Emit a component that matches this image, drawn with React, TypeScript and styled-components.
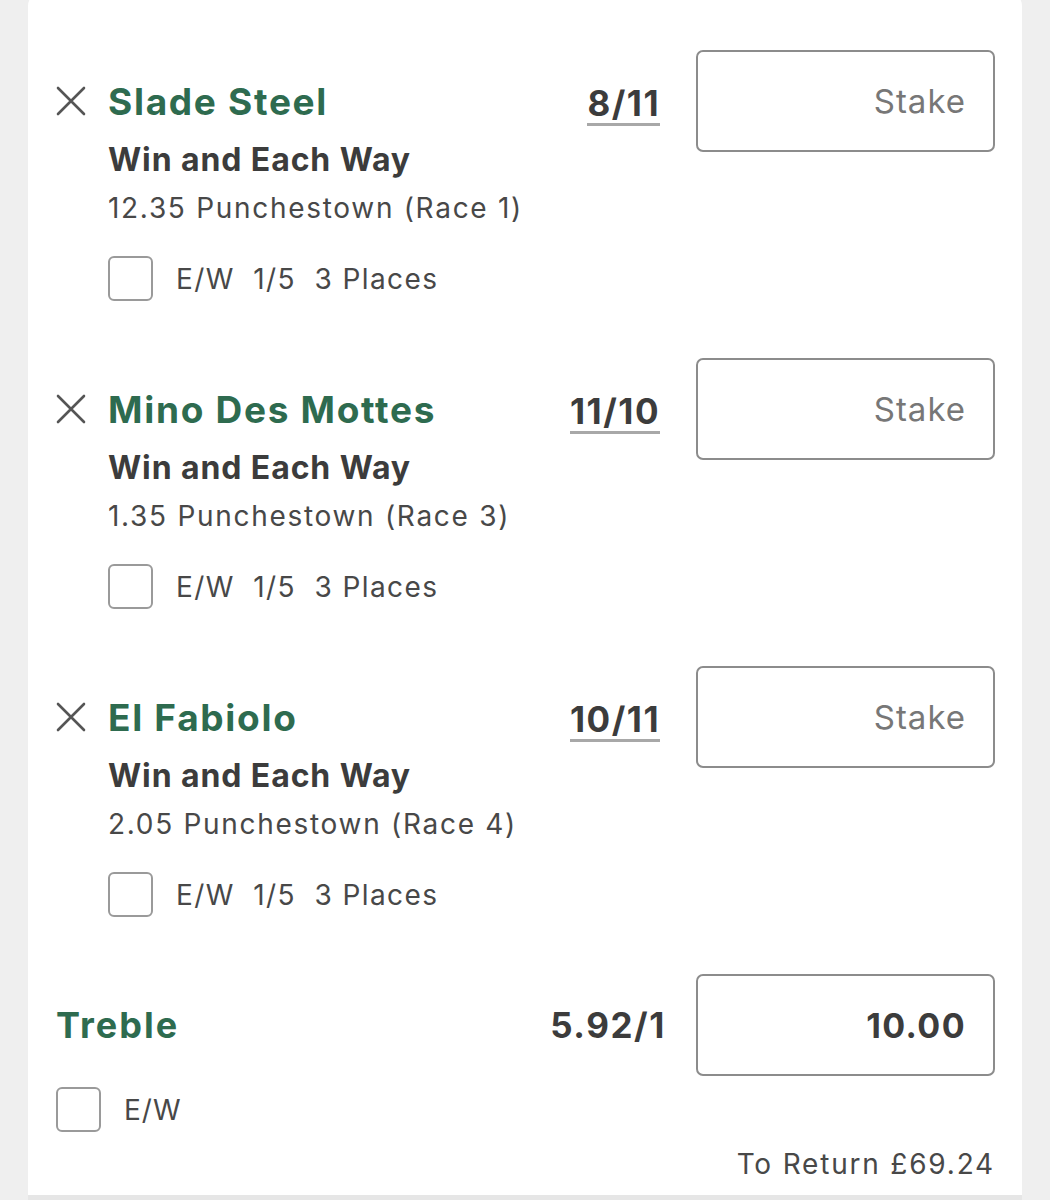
import styled, { createGlobalStyle } from 'styled-components';

// Bet slip: three singles and a treble.

type Selection = {
  id: string;
  name: string;
  odds: string;
  market: string;
  event: string;
  terms: string;
};

const selections: Selection[] = [
  {
    id: 'slade',
    name: 'Slade Steel',
    odds: '8/11',
    market: 'Win and Each Way',
    event: '12.35 Punchestown (Race 1)',
    terms: 'E/W\u00a0\u00a01/5\u00a0\u00a03 Places',
  },
  {
    id: 'mino',
    name: 'Mino Des Mottes',
    odds: '11/10',
    market: 'Win and Each Way',
    event: '1.35 Punchestown (Race 3)',
    terms: 'E/W\u00a0\u00a01/5\u00a0\u00a03 Places',
  },
  {
    id: 'fabiolo',
    name: 'El Fabiolo',
    odds: '10/11',
    market: 'Win and Each Way',
    event: '2.05 Punchestown (Race 4)',
    terms: 'E/W\u00a0\u00a01/5\u00a0\u00a03 Places',
  },
];

const GlobalStyle = createGlobalStyle`
  html, body {
    margin: 0;
    padding: 0;
    background: #efefef;
    font-family: Inter, "Noto Sans", "Liberation Sans", sans-serif;
    -webkit-font-smoothing: antialiased;
  }
`;

function CloseIcon() {
  return (
    <svg width="30" height="30" viewBox="0 0 30 30" fill="none">
      <path d="M2 2 L28 28 M28 2 L2 28" stroke="#555" strokeWidth="2.6" strokeLinecap="round" />
    </svg>
  );
}

export default function App() {
  return (
    <Page>
      <GlobalStyle />
      <Card>
        {selections.map((sel) => (
          <BetRow key={sel.id}>
            <LeftCol>
              <NameLine>
                <RemoveButton type="button" aria-label={`Remove ${sel.name}`}>
                  <CloseIcon />
                </RemoveButton>
                <Name>{sel.name}</Name>
              </NameLine>
              <Details>
                <Market>{sel.market}</Market>
                <EventText>{sel.event}</EventText>
                <CheckRow>
                  <Checkbox />
                  <CheckLabel>{sel.terms}</CheckLabel>
                </CheckRow>
              </Details>
            </LeftCol>
            <OddsCell>
              <Odds $underlined>{sel.odds}</Odds>
            </OddsCell>
            <StakeBox>
              <Placeholder>Stake</Placeholder>
            </StakeBox>
          </BetRow>
        ))}

        <MultipleRow>
          <LeftCol>
            <NameLine>
              <MultipleName>Treble</MultipleName>
            </NameLine>
            <MultipleCheck>
              <Checkbox />
              <CheckLabel $short>E/W</CheckLabel>
            </MultipleCheck>
          </LeftCol>
          <OddsCell>
            <Odds $large>5.92/1</Odds>
          </OddsCell>
          <StakeBox>
            <StakeValue>10.00</StakeValue>
          </StakeBox>
        </MultipleRow>
        <ReturnLine>To Return £69.24</ReturnLine>
      </Card>
      <BottomRule />
    </Page>
  );
}

// ─── Styled Components ───────────────────────────────────────────

const Page = styled.div`
  width: 1050px;
  height: 1200px;
  overflow: hidden;
  background: #efefef;
  display: flex;
  flex-direction: column;
`;

const Card = styled.div`
  margin: -8px 28px 0 28px;
  padding: 58px 27px 0 28px;
  height: 1203px;
  box-sizing: border-box;
  background: #ffffff;
  border-radius: 14px 14px 0 0;
  display: flex;
  flex-direction: column;
  gap: 57px;
`;

const BottomRule = styled.div`
  height: 5px;
  margin: 0 28px;
  background: #e6e6e6;
`;

const BetRow = styled.div`
  display: grid;
  grid-template-columns: 1fr auto 299px;
  column-gap: 36px;
  align-items: start;
`;

const MultipleRow = styled(BetRow)`
  column-gap: 30px;
`;

const LeftCol = styled.div`
  display: flex;
  flex-direction: column;
  padding-top: 29px;
`;

const NameLine = styled.div`
  display: flex;
  align-items: center;
  height: 44px;
`;

const RemoveButton = styled.button`
  width: 52px;
  height: 44px;
  padding: 0;
  margin: 0;
  border: none;
  background: none;
  display: flex;
  align-items: center;
  cursor: pointer;
`;

const Name = styled.span`
  font-size: 37px;
  font-weight: 700;
  color: #2e6b4f;
  letter-spacing: 1.7px;
  white-space: nowrap;
`;

const MultipleName = styled(Name)`
  font-size: 36px;
  letter-spacing: 2px;
`;

const Details = styled.div`
  display: flex;
  flex-direction: column;
  padding-left: 52px;
`;

const Market = styled.div`
  margin-top: 17px;
  font-size: 32px;
  line-height: 40px;
  font-weight: 700;
  letter-spacing: 0.9px;
  color: #3c3c3c;
`;

const EventText = styled.div`
  margin-top: 11px;
  font-size: 28px;
  line-height: 34px;
  letter-spacing: 1.7px;
  color: #484848;
`;

const CheckRow = styled.div`
  display: flex;
  align-items: center;
  gap: 23px;
  margin-top: 31px;
`;

const MultipleCheck = styled(CheckRow)`
  margin-top: 40px;
`;

const Checkbox = styled.span`
  width: 45px;
  height: 45px;
  box-sizing: border-box;
  border: 2px solid #9a9a9a;
  border-radius: 6px;
  background: #fff;
  flex-shrink: 0;
`;

const CheckLabel = styled.span<{ $short?: boolean }>`
  font-size: 28px;
  letter-spacing: ${(p) => (p.$short ? '1px' : '1.4px')};
  color: #484848;
  white-space: nowrap;
`;

const OddsCell = styled.div`
  height: 102px;
  display: flex;
  align-items: center;
`;

const Odds = styled.span<{ $underlined?: boolean; $large?: boolean }>`
  font-size: 35px;
  font-weight: 700;
  color: #3c3c3c;
  line-height: 40px;
  letter-spacing: ${(p) => (p.$large ? '1.6px' : '1.5px')};
  padding-top: ${(p) => (p.$underlined ? '6px' : '0')};
  border-bottom: ${(p) => (p.$underlined ? '3px solid #a8a8a8' : 'none')};
`;

const StakeBox = styled.div`
  height: 102px;
  box-sizing: border-box;
  border: 2px solid #8c8c8c;
  border-radius: 7px;
  display: flex;
  align-items: center;
  justify-content: flex-end;
  padding-right: 27px;
`;

const Placeholder = styled.span`
  font-size: 33px;
  letter-spacing: 1px;
  color: #777777;
`;

const StakeValue = styled.span`
  font-size: 34px;
  font-weight: 700;
  letter-spacing: 1.4px;
  color: #3c3c3c;
`;

const ReturnLine = styled.div`
  margin-top: -42px;
  text-align: right;
  font-size: 28px;
  letter-spacing: 1.8px;
  color: #484848;
`;
